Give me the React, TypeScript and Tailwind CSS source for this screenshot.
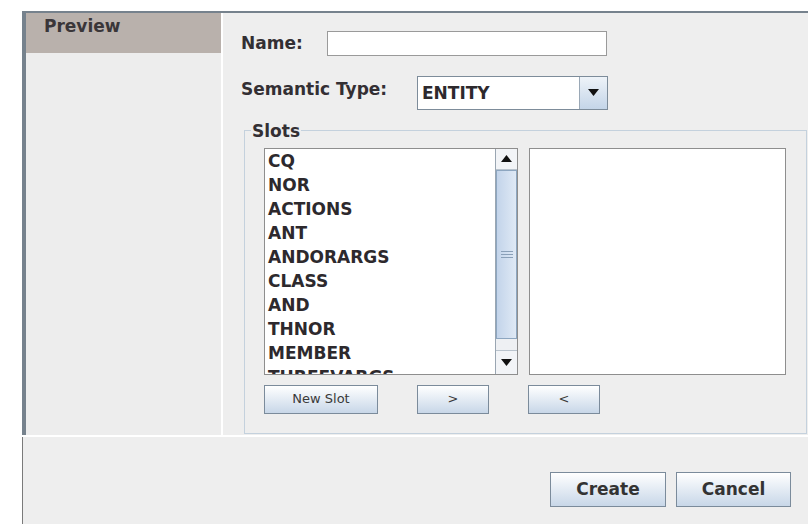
const slots = [
  "CQ",
  "NOR",
  "ACTIONS",
  "ANT",
  "ANDORARGS",
  "CLASS",
  "AND",
  "THNOR",
  "MEMBER",
  "THREEVARGS",
];

const font = { fontFamily: '"DejaVu Sans", Verdana, sans-serif' };

function SmallButton({ label, className }: { label: string; className: string }) {
  return (
    <button
      className={`h-[29px] border border-[#7b8b9b] bg-gradient-to-b from-[#ffffff] to-[#c8d7e8] text-[13px] text-[#3a3a3a] ${className}`}
    >
      {label}
    </button>
  );
}

function BigButton({ label, className }: { label: string; className: string }) {
  return (
    <button
      className={`h-[35px] border border-[#7b8b9b] bg-gradient-to-b from-[#ffffff] to-[#c8d7e8] text-[17px] font-bold text-[#333] ${className}`}
    >
      {label}
    </button>
  );
}

function ScrollBar() {
  return (
    <div className="flex h-full w-[22px] flex-col border-l border-[#9aa6b2] bg-[#eef0f3]">
      <div className="flex h-[21px] items-center justify-center border-b border-[#b9c3cd] bg-[#f2f4f7]">
        <svg width="11" height="7" viewBox="0 0 11 7">
          <path d="M0 7 L5.5 0 L11 7 Z" fill="#111" />
        </svg>
      </div>
      <div className="relative flex h-[169px] items-center justify-center border border-[#8da6c0] bg-gradient-to-r from-[#c3d4ea] to-[#dfe9f5]">
        <div className="flex flex-col gap-[2px]">
          <div className="h-px w-[12px] bg-[#8aa0b8]" />
          <div className="h-px w-[12px] bg-[#8aa0b8]" />
          <div className="h-px w-[12px] bg-[#8aa0b8]" />
        </div>
      </div>
      <div className="flex-1" />
      <div className="flex h-[24px] items-center justify-center border-t border-[#b9c3cd] bg-[#f2f4f7]">
        <svg width="11" height="7" viewBox="0 0 11 7">
          <path d="M0 0 L5.5 7 L11 0 Z" fill="#111" />
        </svg>
      </div>
    </div>
  );
}

export default function App() {
  return (
    <div className="h-[529px] w-[811px] overflow-hidden bg-white pl-[22px] pt-[11px]" style={font}>
      <div className="flex w-[786px] flex-col">
        {/* main area */}
        <div className="flex h-[424px] border-l-4 border-t-2 border-[#76828d]">
          <div className="flex w-[195px] flex-col bg-[#ededed]">
            <div className="h-[40px] bg-[#b9b1ac] pl-[18px] pt-[3px] text-[17px] font-bold leading-[20px] text-[#3a3639]">
              Preview
            </div>
          </div>
          <div className="w-[2px] bg-white" />
          <div className="flex flex-1 flex-col bg-[#eeeeee] pl-[18px] pr-px">
            <div className="mt-[18px] flex items-center">
              <span className="w-[86px] text-[17px] font-bold text-[#332f33]">Name:</span>
              <div className="h-[25px] w-[280px] border border-[#9a9a9a] bg-white" />
            </div>
            <div className="mt-[19px] flex items-start">
              <span className="mt-[3px] w-[176px] text-[17px] font-bold leading-[20px] text-[#332f33]">
                Semantic Type:
              </span>
              <div className="flex h-[34px] w-[191px] border border-[#7d8c9a] bg-white">
                <div className="flex-1 pl-[4px] pt-[6px] text-[17px] font-bold leading-[20px] text-[#2d292d]">
                  ENTITY
                </div>
                <div className="flex w-[28px] items-center justify-center border-l border-[#9aa8b6] bg-gradient-to-b from-[#eef3f8] to-[#c4d5e8]">
                  <svg width="11" height="7" viewBox="0 0 11 7">
                    <path d="M0 0 L5.5 7 L11 0 Z" fill="#111" />
                  </svg>
                </div>
              </div>
            </div>
            <fieldset className="ml-[3px] mt-[11px] border border-[#c4d1dd] pb-[19px]">
              <legend className="ml-[6px] px-[1px] text-[17px] font-bold leading-[20px] text-[#332f33]">
                Slots
              </legend>
              <div className="pl-[19px]">
                <div className="mt-[7px] flex gap-[11px]">
                  <div className="flex h-[227px] w-[254px] border border-[#8e8e8e] bg-white">
                    <div className="flex-1 overflow-hidden">
                      {slots.map((s) => (
                        <div
                          key={s}
                          className="h-[24px] pl-[3px] text-[17px] font-bold leading-[24px] text-[#2d292d]"
                        >
                          {s}
                        </div>
                      ))}
                    </div>
                    <ScrollBar />
                  </div>
                  <div className="h-[227px] w-[257px] border border-[#8e8e8e] bg-white" />
                </div>
                <div className="mt-[10px] flex">
                  <SmallButton label="New Slot" className="w-[114px]" />
                  <SmallButton label=">" className="ml-[39px] w-[72px]" />
                  <SmallButton label="<" className="ml-[39px] w-[72px]" />
                </div>
              </div>
            </fieldset>
          </div>
        </div>
        <div className="h-[2px] bg-white" />
        {/* button bar */}
        <div className="flex h-[87px] justify-end gap-[10px] border-l border-[#7a7a7a] bg-[#eeeeee] pr-[17px] pt-[35px]">
          <BigButton label="Create" className="w-[116px]" />
          <BigButton label="Cancel" className="w-[115px]" />
        </div>
      </div>
    </div>
  );
}
